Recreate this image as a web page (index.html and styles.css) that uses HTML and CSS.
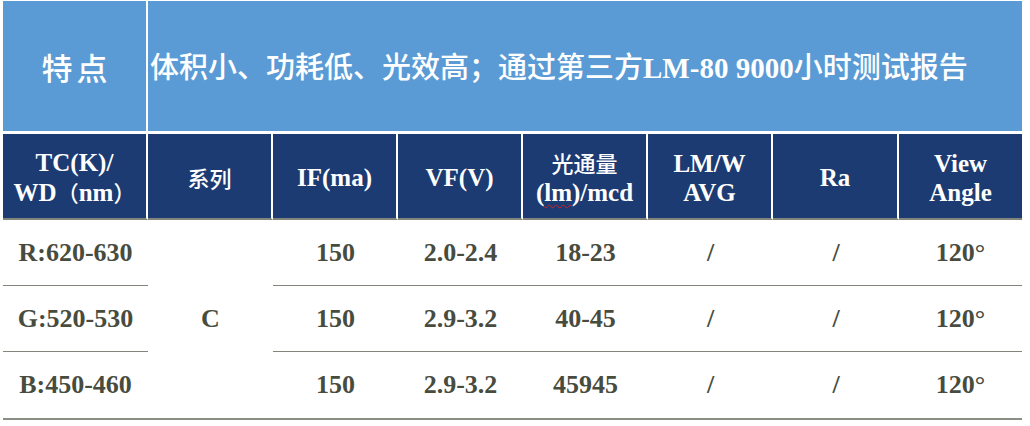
FILE: index.html
```html
<!DOCTYPE html>
<html lang="zh-CN">
<head>
<meta charset="utf-8">
<title>特点</title>
<link rel="stylesheet" href="styles.css">
</head>
<body>
<table class="spec">
  <colgroup>
    <col class="c1"><col class="c2"><col class="c3"><col class="c4"><col class="c5"><col class="c6"><col class="c7"><col class="c8">
  </colgroup>
  <tr class="feature">
    <td class="feat-label"><span class="zh">特点</span></td>
    <td class="feat-text" colspan="7"><span class="zh">体积小、功耗低、光效高；通过第三方</span>LM-80 9000<span class="zh">小时测试报告</span></td>
  </tr>
  <tr class="head">
    <th>TC(K)/<br>WD<span class="zh">（</span>nm<span class="zh">）</span></th>
    <th><span class="zh">系列</span></th>
    <th>IF(ma)</th>
    <th>VF(V)</th>
    <th><span class="zh">光通量</span><br>(<span class="spell">lm</span>)/mcd</th>
    <th>LM/W<br>AVG</th>
    <th>Ra</th>
    <th class="last">View<br>Angle</th>
  </tr>
  <tr class="row r1">
    <td>R:620-630</td>
    <td class="series" rowspan="3">C</td>
    <td>150</td>
    <td>2.0-2.4</td>
    <td>18-23</td>
    <td>/</td>
    <td>/</td>
    <td>120°</td>
  </tr>
  <tr class="row r2">
    <td>G:520-530</td>
    <td>150</td>
    <td>2.9-3.2</td>
    <td>40-45</td>
    <td>/</td>
    <td>/</td>
    <td>120°</td>
  </tr>
  <tr class="row r3">
    <td>B:450-460</td>
    <td>150</td>
    <td>2.9-3.2</td>
    <td>45945</td>
    <td>/</td>
    <td>/</td>
    <td>120°</td>
  </tr>
</table>
</body>
</html>
```

FILE: styles.css
```css
* { box-sizing: border-box; }

html, body {
  margin: 0;
  padding: 0;
  background: #ffffff;
}

body {
  padding: 1px 0 0 3px;
  font-family: "Liberation Serif", "Noto Sans CJK SC", serif;
}

.spec {
  table-layout: fixed;
  width: 1019px;
  border-collapse: separate;
  border-spacing: 0;
  font-weight: 700;
}

.c1 { width: 145px; }
.c2 { width: 125px; }
.c3 { width: 125px; }
.c4 { width: 125px; }
.c5 { width: 125px; }
.c6 { width: 125px; }
.c7 { width: 126px; }
.c8 { width: 123px; }

.spec td, .spec th {
  padding: 0;
  text-align: center;
  vertical-align: middle;
}

.zh {
  font-family: "Noto Sans CJK SC", "Liberation Serif", sans-serif;
}

/* feature row */
.feature td {
  height: 133px;
  background: #5b9bd5;
  color: #ffffff;
  border-bottom: 3px solid #ffffff;
}

.feat-label {
  border-right: 2px solid #ffffff;
  font-size: 31px;
  letter-spacing: 4px;
  padding-left: 4px !important;
}

.feat-label .zh { font-weight: 500; }

.feat-text {
  text-align: left !important;
  font-size: 29px;
  padding-left: 2px !important;
  padding-bottom: 2px !important;
  white-space: nowrap;
}

.feat-text .zh { font-weight: 500; }

/* header row */
.head th {
  height: 86px;
  background: #1c3b73;
  color: #ffffff;
  font-size: 25px;
  line-height: 29px;
  border-right: 2px solid #ffffff;
  border-bottom: 2px solid #80867b;
  padding-top: 3px;
}

.head th.last { border-right: 0; }

.head th .zh {
  font-size: 22px;
  font-weight: 500;
}

.spell {
  text-decoration: underline wavy #d02020;
  text-decoration-thickness: 1px;
  text-underline-offset: 3px;
}

/* data rows */
.row td {
  color: #474c3f;
  font-size: 26px;
  border-bottom: 1px solid #80867b;
}

.r1 td { height: 66px; }
.r2 td { height: 66px; }
.r3 td { height: 68px; border-bottom: 2px solid #8a8f85; }

.row td.series {
  border-bottom: 2px solid #8a8f85;
}
```
